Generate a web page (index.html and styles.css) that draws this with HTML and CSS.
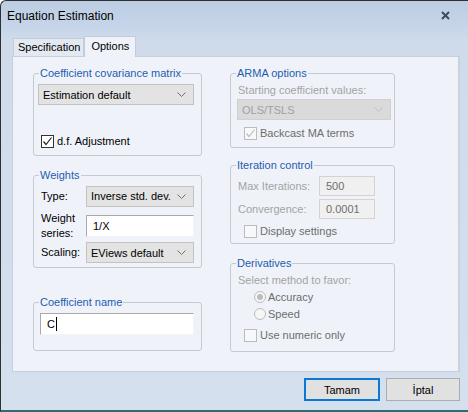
FILE: index.html
```html
<!DOCTYPE html>
<html>
<head>
<meta charset="utf-8">
<link rel="stylesheet" href="styles.css">
</head>
<body>
<div class="window">
  <div class="titlebar">
    <span class="title">Equation Estimation</span>
    <svg class="close" width="9" height="9" viewBox="0 0 9 9"><path d="M1 1 L8 8 M8 1 L1 8" stroke="#3d4a66" stroke-width="2" fill="none"/></svg>
  </div>
  <div class="client">
    <div class="tabs">
      <div class="tab">Specification</div>
      <div class="tab active">Options</div>
    </div>
    <div class="panel">
      <div class="col">
        <fieldset class="grp g-cov">
          <legend>Coefficient covariance matrix</legend>
          <div class="combo cov-combo"><span>Estimation default</span><svg class="chev" width="9" height="5" viewBox="0 0 9 5"><path d="M0.5 0.5 L4.5 4.5 L8.5 0.5" stroke="#707070" fill="none"/></svg></div>
          <div class="check-row df-row"><span class="cb"><svg width="11" height="11" viewBox="0 0 11 11"><path d="M1.5 5.5 L4 8.5 L9.5 1.5" stroke="#222" stroke-width="1.2" fill="none"/></svg></span><span>d.f. Adjustment</span></div>
        </fieldset>
        <fieldset class="grp g-weights">
          <legend>Weights</legend>
          <div class="wgrid">
            <span class="wlabel">Type:</span>
            <div class="combo"><span>Inverse std. dev.</span><svg class="chev" width="9" height="5" viewBox="0 0 9 5"><path d="M0.5 0.5 L4.5 4.5 L8.5 0.5" stroke="#707070" fill="none"/></svg></div>
            <span class="wlabel two">Weight<br>series:</span>
            <div class="field wfield"><span>1/X</span></div>
            <span class="wlabel">Scaling:</span>
            <div class="combo"><span>EViews default</span><svg class="chev" width="9" height="5" viewBox="0 0 9 5"><path d="M0.5 0.5 L4.5 4.5 L8.5 0.5" stroke="#707070" fill="none"/></svg></div>
          </div>
        </fieldset>
        <fieldset class="grp g-name">
          <legend>Coefficient name</legend>
          <div class="field namefield"><span>C</span><span class="caret"></span></div>
        </fieldset>
      </div>
      <div class="col">
        <fieldset class="grp g-arma">
          <legend>ARMA options</legend>
          <div class="dis-text arma-label">Starting coefficient values:</div>
          <div class="combo disabled arma-combo"><span>OLS/TSLS</span><svg class="chev" width="9" height="5" viewBox="0 0 9 5"><path d="M0.5 0.5 L4.5 4.5 L8.5 0.5" stroke="#bdbdbd" fill="none"/></svg></div>
          <div class="check-row backcast"><span class="cb dis"><svg width="11" height="11" viewBox="0 0 11 11"><path d="M1.5 5.5 L4 8.5 L9.5 1.5" stroke="#bcbcbc" stroke-width="1.2" fill="none"/></svg></span><span class="lbl">Backcast MA terms</span></div>
        </fieldset>
        <fieldset class="grp g-iter">
          <legend>Iteration control</legend>
          <div class="igrid">
            <span class="dis-text">Max Iterations:</span>
            <div class="dfield">500</div>
            <span class="dis-text">Convergence:</span>
            <div class="dfield">0.0001</div>
          </div>
          <div class="check-row disp"><span class="cb dis"></span><span class="lbl">Display settings</span></div>
        </fieldset>
        <fieldset class="grp g-deriv">
          <legend>Derivatives</legend>
          <div class="dis-text deriv-label">Select method to favor:</div>
          <div class="radio-row first"><span class="rb on"></span><span class="lbl">Accuracy</span></div>
          <div class="radio-row"><span class="rb"></span><span class="lbl">Speed</span></div>
          <div class="check-row numeric"><span class="cb dis"></span><span class="lbl">Use numeric only</span></div>
        </fieldset>
      </div>
    </div>
    <div class="buttons">
      <button class="btn default">Tamam</button>
      <button class="btn">İptal</button>
    </div>
  </div>
</div>
</body>
</html>
```
FILE: styles.css
```css
* { box-sizing: border-box; }
html, body { margin: 0; padding: 0; }
body {
  width: 468px;
  height: 412px;
  overflow: hidden;
  background: #ffffff;
  font-family: "Liberation Sans", Arial, sans-serif;
  font-size: 11px;
  color: #000;
}
.window {
  width: 468px;
  height: 412px;
  display: flex;
  flex-direction: column;
  border-left: 1px solid #303030;
  border-top: 1px solid #303030;
  border-bottom: 2px solid #2f6c74;
  border-top-left-radius: 6px;
  background: linear-gradient(#bccde3 0px, #c6d5e9 26px, #cfdbeb 40px, #d5e0ee 100%);
}
.titlebar {
  height: 29px;
  display: flex;
  align-items: center;
  justify-content: space-between;
  padding: 0 18px 0 6px;
}
.title { font-size: 12px; line-height: 16px; }
.client {
  flex: 1;
  display: flex;
  flex-direction: column;
  padding: 0 8px 0 11px;
}
.tabs {
  height: 26px;
  display: flex;
  align-items: flex-end;
  padding-left: 1px;
}
.tab {
  height: 18px;
  line-height: 16px;
  padding: 0 3px 0 4px;
  border: 1px solid #c3ccd8;
  border-bottom: none;
  background: #e3e9f1;
  color: #000;
}
.tab.active {
  height: 21px;
  line-height: 19px;
  padding: 0 6px 0 6px;
  background: #eff3f9;
  margin-bottom: -1px;
  position: relative;
  z-index: 1;
}
.panel {
  width: 448px;
  height: 316px;
  background: #eff3f9;
  border: 1px solid #c6cfdb;
  border-right: 2px solid #c9d2dd;
  display: grid;
  grid-template-columns: 169px 165px;
  column-gap: 28px;
  align-content: start;
  padding: 9px 0 0 20px;
}
.col { display: flex; flex-direction: column; }
.grp {
  margin: 0;
  padding: 0;
  min-width: 0;
  border: 1px solid #c5cad2;
  border-radius: 3px;
}
.grp legend {
  color: #1f5cb0;
  padding: 0 1px;
  margin-left: 5px;
  line-height: 14px;
}
.g-cov { height: 90px; }
.g-weights { height: 100px; margin-top: 12px; }
.g-name { height: 56px; margin-top: 27px; }
.g-arma { height: 82px; }
.g-iter { height: 86px; margin-top: 10px; }
.g-deriv { height: 96px; margin-top: 12px; }

.combo {
  height: 21px;
  border: 1px solid #c2c2c2;
  background: #e3e3e3;
  display: flex;
  align-items: center;
  justify-content: space-between;
  padding: 0 7px 0 4px;
  line-height: 16px;
  white-space: nowrap;
}
.combo.disabled { background: #dadada; border-color: #d0d0d0; color: #a0a0a0; }
.cov-combo { margin: 4px 7px 0 4px; }
.check-row { display: flex; align-items: center; gap: 3px; line-height: 14px; white-space: nowrap; }
.df-row { margin: 29px 0 0 7px; }
.cb {
  width: 13px;
  height: 13px;
  border: 1px solid #333;
  background: #fff;
  display: flex;
  align-items: center;
  justify-content: center;
}
.cb.dis { border-color: #bcbcbc; background: #f7f8fa; }
.wgrid {
  display: grid;
  grid-template-columns: 45px 108px;
  grid-template-rows: 22px 22px 22px;
  row-gap: 8px;
  align-items: center;
  margin: 3px 0 0 7px;
}
.wgrid > :nth-child(5), .wgrid > :nth-child(6) { margin-top: -7px; }
.wlabel { line-height: 15px; }
.field {
  height: 22px;
  background: #fff;
  border: 1px solid;
  border-color: #a9a9a9 #f2f4f7 #f2f4f7 #a9a9a9;
  display: flex;
  align-items: center;
  padding-left: 6px;
}
.namefield { width: 154px; margin: 4px 0 0 6px; }
.caret { width: 1px; height: 14px; background: #000; margin-left: 1px; }
.dis-text { color: #a3a3a3; white-space: nowrap; }
.lbl { color: #6d6d6d; }
.arma-label { margin: 3px 0 0 7px; line-height: 14px; }
.arma-combo { width: 154px; margin: 2px 0 0 6px; }
.backcast { margin: 6px 0 0 13px; }
.igrid {
  display: grid;
  grid-template-columns: 81px 56px;
  row-gap: 3px;
  align-items: center;
  margin: 4px 0 0 7px;
}
.dfield {
  height: 20px;
  background: #f0f0f0;
  border: 1px solid #d3d3d3;
  color: #6e6e6e;
  padding-left: 6px;
  line-height: 18px;
}
.disp { margin: 5px 0 0 13px; }
.deriv-label { margin: 3px 0 0 7px; line-height: 14px; }
.radio-row { display: flex; align-items: center; gap: 2px; margin-left: 23px; height: 17px; }
.radio-row.first { margin-top: 1px; }
.rb {
  width: 12px;
  height: 12px;
  border-radius: 50%;
  border: 1px solid #bdbdbd;
  background: #f6f6f6;
  display: flex;
  align-items: center;
  justify-content: center;
}
.rb.on::after {
  content: "";
  width: 6px;
  height: 6px;
  border-radius: 50%;
  background: #bcbcbc;
}
.numeric { margin: 6px 0 0 13px; }
.buttons {
  display: flex;
  justify-content: flex-end;
  gap: 6px;
  padding-top: 6px;
}
.btn {
  width: 74px;
  height: 23px;
  border: 1px solid #adadad;
  background: #e1e1e1;
  font-family: inherit;
  font-size: 11px;
  color: #000;
  padding: 0;
}
.btn.default { width: 76px; border: 2px solid #0a78d4; }
```
